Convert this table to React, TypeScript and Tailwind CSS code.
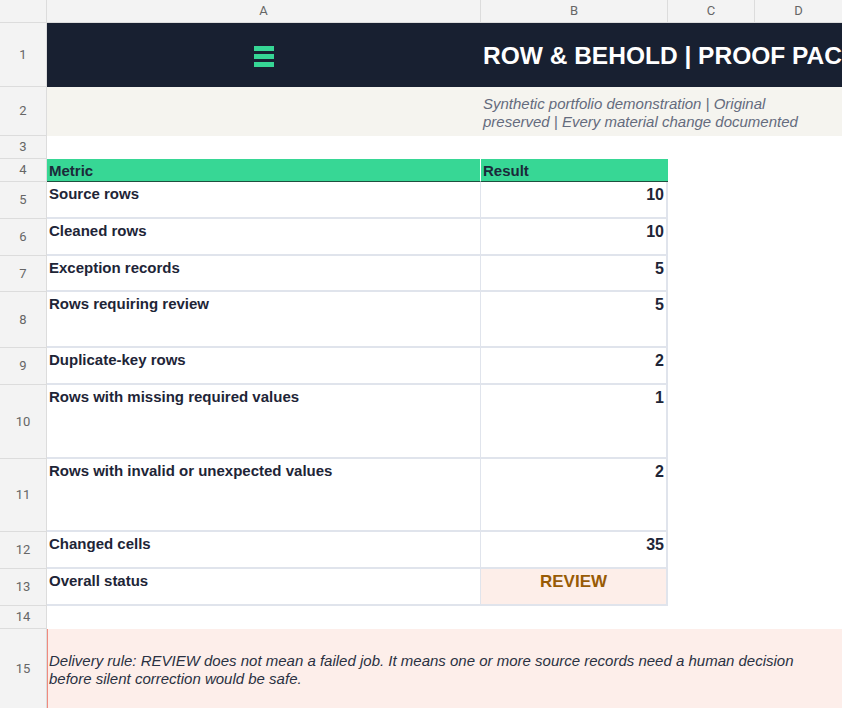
import React from "react";

const rows: { label: string; value: string }[] = [
  { label: "Source rows", value: "10" },
  { label: "Cleaned rows", value: "10" },
  { label: "Exception records", value: "5" },
  { label: "Rows requiring review", value: "5" },
  { label: "Duplicate-key rows", value: "2" },
  { label: "Rows with missing required values", value: "1" },
  { label: "Rows with invalid or unexpected values", value: "2" },
  { label: "Changed cells", value: "35" },
];

function RowHead({ n }: { n: number }) {
  return (
    <div className="flex items-center justify-center bg-[#f3f3f3] border-r border-b border-[#dcdcdc] text-[13px] text-[#666666] font-['Roboto',sans-serif]">
      {n}
    </div>
  );
}

function ColHead({ l }: { l: string }) {
  return (
    <div className="flex items-center justify-center bg-[#f3f3f3] border-r border-b border-[#dcdcdc] text-[13px] text-[#666666] font-['Roboto',sans-serif]">
      {l}
    </div>
  );
}

export default function App() {
  return (
    <div className="w-[842px] h-[708px] overflow-hidden bg-white font-['Liberation_Sans',Arial,sans-serif]">
      <div className="grid w-[843px] grid-cols-[47px_434px_187px_87px_88px] grid-rows-[23px_64px_49px_23px_23px_37px_37px_36px_56px_37px_74px_73px_37px_37px_23px_81px]">
        {/* column header */}
        <div className="bg-[#f3f3f3] border-r border-b border-[#dcdcdc]" />
        <ColHead l="A" />
        <ColHead l="B" />
        <ColHead l="C" />
        <ColHead l="D" />

        {/* row 1 */}
        <RowHead n={1} />
        <div className="flex items-center justify-center bg-[#182031] pt-[4px]">
          <svg width="20" height="22" viewBox="0 0 20 22">
            <rect x="0" y="0" width="20" height="5" fill="#36d695" />
            <rect x="0" y="8" width="20" height="5" fill="#36d695" />
            <rect x="0" y="16" width="20" height="5" fill="#36d695" />
          </svg>
        </div>
        <div className="col-span-3 flex items-center bg-[#182031] pl-[2px] pt-[2px] overflow-hidden">
          <div className="whitespace-nowrap text-[24.5px] font-bold text-white">
            ROW &amp; BEHOLD | PROOF PACK
          </div>
        </div>

        {/* row 2 */}
        <RowHead n={2} />
        <div className="bg-[#f5f4ef]" />
        <div className="col-span-3 flex items-center bg-[#f5f4ef] pl-[2px] pt-[3px]">
          <p className="w-[340px] text-[15px] leading-[18px] italic text-[#646b7d]">
            Synthetic portfolio demonstration | Original preserved | Every material change documented
          </p>
        </div>

        {/* row 3 */}
        <RowHead n={3} />
        <div className="col-span-4" />

        {/* row 4 */}
        <RowHead n={4} />
        <div className="flex items-end bg-[#37d795] border-b border-r border-b-[#1f4f3f] border-r-white px-[2px] pb-[1px] text-[15px] leading-[18px] font-bold text-[#1b2a3a]">
          Metric
        </div>
        <div className="flex items-end bg-[#37d795] border-b border-b-[#1f4f3f] px-[2px] pb-[1px] text-[15px] leading-[18px] font-bold text-[#1b2a3a]">
          Result
        </div>
        <div className="col-span-2" />

        {/* rows 5-12 */}
        {rows.map((r, i) => (
          <React.Fragment key={r.label}>
            <RowHead n={i + 5} />
            <div className="border-b-2 border-r border-[#e0e4ec] px-[2px] pt-[3px] text-[15px] leading-[18px] font-bold text-[#1e2537]">
              {r.label}
            </div>
            <div className="border-b-2 border-r-2 border-[#e0e4ec] px-[2px] pt-[4px] text-right text-[16px] leading-[18px] font-bold text-[#1e2537]">
              {r.value}
            </div>
            <div className="col-span-2" />
          </React.Fragment>
        ))}

        {/* row 13 */}
        <RowHead n={13} />
        <div className="border-b-2 border-r border-[#e0e4ec] px-[2px] pt-[3px] text-[15px] leading-[18px] font-bold text-[#1e2537]">
          Overall status
        </div>
        <div className="border-b-2 border-r-2 border-[#e0e4ec] bg-[#fdeee9] pt-[3px] text-center text-[17px] leading-[20px] font-bold text-[#985b05]">
          REVIEW
        </div>
        <div className="col-span-2" />

        {/* row 14 */}
        <RowHead n={14} />
        <div className="col-span-4" />

        {/* row 15 */}
        <RowHead n={15} />
        <div className="col-span-4 flex items-center bg-[#fdeeea] border-l border-[#f08a7e] px-[1px]">
          <p className="text-[15px] leading-[18px] italic text-[#2a3142]">
            Delivery rule: REVIEW does not mean a failed job. It means one or more source records need a human decision
            <br />
            before silent correction would be safe.
          </p>
        </div>
      </div>
    </div>
  );
}
